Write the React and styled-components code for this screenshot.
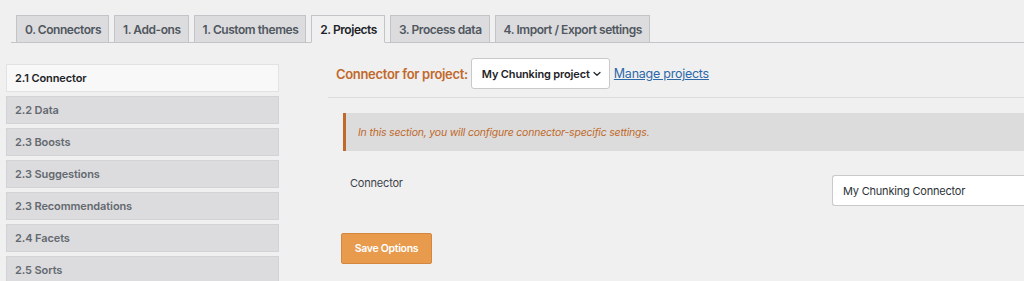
import React from "react";
import styled, { createGlobalStyle } from "styled-components";

const Global = createGlobalStyle`
  html, body { margin: 0; padding: 0; background: #f0f0f1; }
  body { font-family: Inter, "Noto Sans", "Liberation Sans", sans-serif; overflow: hidden; }
`;

const Page = styled.div`
  width: 1024px;
  height: 281px;
  background: #f0f0f1;
  overflow: hidden;
`;

const TabBar = styled.nav`
  display: flex;
  gap: 5px;
  margin: 15px 0 0 11px;
  padding-left: 5px;
  border-bottom: 1px solid #c3c4c7;
  height: 27px;
`;

const Tab = styled.a`
  display: flex;
  align-items: center;
  box-sizing: border-box;
  height: 28px;
  padding: 0 7px 0 8px;
  font-size: 12px;
  letter-spacing: -0.45px;
  font-weight: 600;
  color: ${(p) => (p.$active ? "#1d2327" : "#50575e")};
  background: ${(p) => (p.$active ? "#f0f0f1" : "#dcdcde")};
  border: 1px solid #c3c4c7;
  border-bottom-color: ${(p) => (p.$active ? "#f0f0f1" : "#c3c4c7")};
  white-space: nowrap;
  text-decoration: none;
`;

const Body = styled.div`
  display: flex;
  align-items: flex-start;
`;

const Sidebar = styled.ul`
  list-style: none;
  margin: 21px 0 0 6px;
  padding: 0;
  width: 273px;
  display: flex;
  flex-direction: column;
  gap: 4px;
  flex-shrink: 0;
`;

const SideItem = styled.li`
  box-sizing: border-box;
  height: 28px;
  display: flex;
  align-items: center;
  padding-left: 8px;
  font-size: 11px;
  letter-spacing: -0.1px;
  font-weight: 600;
  color: ${(p) => (p.$active ? "#1d2327" : "#646970")};
  background: ${(p) => (p.$active ? "#f8f8f8" : "#dcdcde")};
  border: 1px solid ${(p) => (p.$active ? "#e2e2e4" : "#d3d3d5")};
`;

const Main = styled.div`
  flex: 1;
  margin-left: 49px;
  padding-top: 15px;
  min-width: 0;
`;

const HeadRow = styled.div`
  display: flex;
  align-items: center;
  height: 31px;
  padding: 0 0 8px 8px;
  border-bottom: 1px solid #dcdcde;
`;

const HeadLabel = styled.span`
  font-size: 13px;
  letter-spacing: -0.32px;
  font-weight: 600;
  color: #c0692a;
  margin-right: 3px;
`;

const Select = styled.div`
  box-sizing: border-box;
  height: 31px;
  width: 139px;
  display: flex;
  align-items: center;
  gap: 3px;
  padding: 0 8px 0 10px;
  background: #fff;
  border: 1px solid #c9c9cc;
  border-radius: 3px;
  font-size: 11px;
  letter-spacing: -0.15px;
  font-weight: 600;
  color: #1d2327;
  white-space: nowrap;
`;

const Link = styled.a`
  margin-left: 4px;
  font-size: 12.5px;
  letter-spacing: -0.25px;
  color: #2d68a8;
  text-decoration: underline;
`;

const Notice = styled.div`
  margin: 15px 0 0 15px;
  height: 38px;
  box-sizing: border-box;
  display: flex;
  align-items: center;
  padding-left: 12px;
  background: #dcdcdc;
  border-left: 3px solid #c0692a;
  font-size: 10.5px;
  letter-spacing: -0.2px;
  font-style: italic;
  color: #c0692a;
`;

const FormRow = styled.div`
  display: grid;
  grid-template-columns: 482px 1fr;
  margin: 24px 0 0 22px;
  align-items: start;
`;

const FieldLabel = styled.label`
  font-size: 11px;
  letter-spacing: -0.2px;
  color: #3c434a;
  padding-top: 1px;
`;

const Input = styled.div`
  box-sizing: border-box;
  height: 31px;
  width: 220px;
  display: flex;
  align-items: center;
  padding-left: 10px;
  background: #fff;
  border: 1px solid #c9c9cc;
  border-radius: 3px 0 0 3px;
  border-right: none;
  font-size: 11px;
  letter-spacing: -0.2px;
  color: #2c3338;
  white-space: nowrap;
`;

const SaveButton = styled.button`
  margin: 27px 0 0 13px;
  height: 31px;
  width: 91px;
  box-sizing: border-box;
  background: #e89b4d;
  border: 1px solid #d4883d;
  border-radius: 2px;
  color: #fff;
  font-family: inherit;
  font-size: 10.5px;
  letter-spacing: -0.3px;
  font-weight: 600;
  padding: 0;
`;

const Chevron = () => (
  <svg width="8" height="6" viewBox="0 0 8 6" fill="none">
    <path d="M1 1.5 L4 4.3 L7 1.5" stroke="#1d2327" strokeWidth="1.2" strokeLinecap="round" strokeLinejoin="round" />
  </svg>
);

const tabs = [
  "0. Connectors",
  "1. Add-ons",
  "1. Custom themes",
  "2. Projects",
  "3. Process data",
  "4. Import / Export settings",
];

const items = [
  "2.1 Connector",
  "2.2 Data",
  "2.3 Boosts",
  "2.3 Suggestions",
  "2.3 Recommendations",
  "2.4 Facets",
  "2.5 Sorts",
];

export default function App() {
  return (
    <Page>
      <Global />
      <TabBar>
        {tabs.map((t, i) => (
          <Tab key={t} $active={i === 3}>
            {t}
          </Tab>
        ))}
      </TabBar>
      <Body>
        <Sidebar>
          {items.map((t, i) => (
            <SideItem key={t} $active={i === 0}>
              {t}
            </SideItem>
          ))}
        </Sidebar>
        <Main>
          <HeadRow>
            <HeadLabel>Connector for project:</HeadLabel>
            <Select>
              My Chunking project <Chevron />
            </Select>
            <Link href="#">Manage projects</Link>
          </HeadRow>
          <Notice>In this section, you will configure connector-specific settings.</Notice>
          <FormRow>
            <FieldLabel>Connector</FieldLabel>
            <Input>My Chunking Connector</Input>
          </FormRow>
          <SaveButton>Save Options</SaveButton>
        </Main>
      </Body>
    </Page>
  );
}
